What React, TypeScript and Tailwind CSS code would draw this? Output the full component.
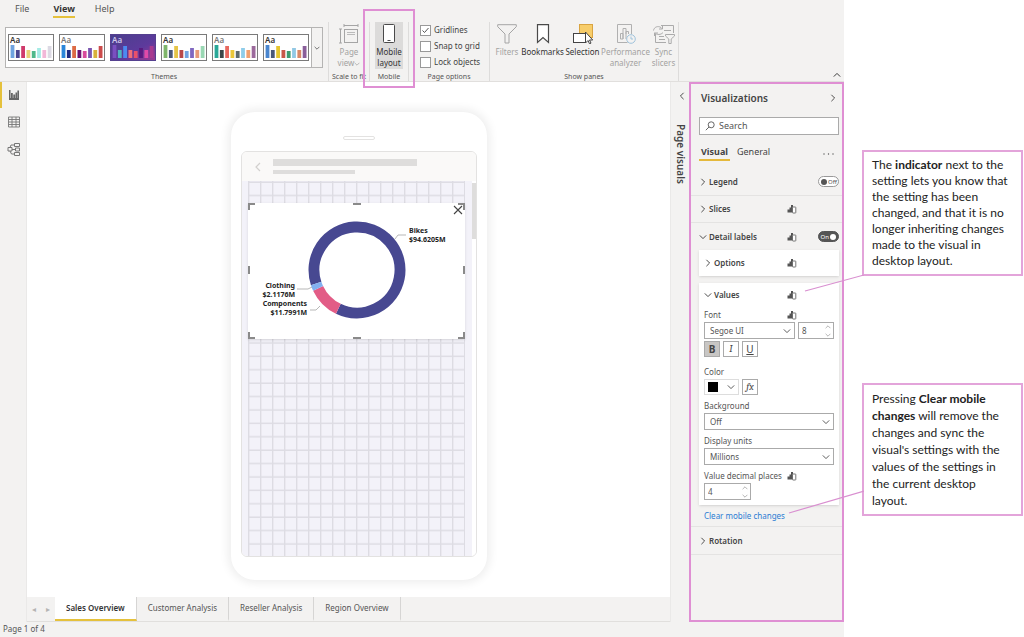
import { useState } from "react";
import type { ReactNode } from "react";

type Theme = { dark?: boolean; muted?: boolean; colors: string[] };

const THEMES: Theme[] = [
  { colors: ["#6fa3e0", "#4a4590", "#cf3a6b", "#e8d079", "#4fb98a", "#a5ebe5", "#f2b7d8", "#dcd9e4"] },
  { muted: true, colors: ["#2b86d9", "#1e2a80", "#dd6b45", "#6b1470", "#d84a9c", "#7a55b0", "#d8b13a", "#cc4b4b"] },
  { dark: true, colors: ["#7a4fc0", "#4fb5c0", "#4c8af0", "#ee6f78", "#e8506a", "#5a1a80", "#e04aa8", "#a83a90"] },
  { colors: ["#7fb56a", "#4a5878", "#e5c548", "#b8484a", "#72a3e0", "#8068c0", "#e89a78", "#9ad8b4"] },
  { muted: true, colors: ["#2aa898", "#3c4648", "#e8685f", "#ecc83a", "#5f6b6d", "#8fcdea", "#f0a070", "#9c6a9c"] },
  { colors: ["#4a86cf", "#4a5878", "#e5c52e", "#c8574a", "#3f9a70", "#92c8e4", "#d88868", "#8a5f9a"] },
];

const BAR_HEIGHTS = [13, 8, 12, 8, 7, 10, 8, 12];

function ThemeThumb({ theme }: { theme: Theme }) {
  const text = theme.dark ? "#cfc9ea" : theme.muted ? "#777" : "#333";
  return (
    <button type="button" aria-label="Theme" className="h-[27px] w-[46px]">
      <svg viewBox="0 0 46 27" className="h-full w-full">
        <defs>
          <linearGradient id="darkTheme" x1="0" y1="0" x2="1" y2="1">
            <stop offset="0" stopColor="#4a3f8c" />
            <stop offset="0.6" stopColor="#5d3a9c" />
            <stop offset="1" stopColor="#a03a90" />
          </linearGradient>
        </defs>
        <rect x="0.5" y="0.5" width="45" height="26" fill={theme.dark ? "url(#darkTheme)" : "#fff"} stroke={theme.dark ? "#55408f" : "#7a7a7a"} />
        <text x="2" y="9" fontSize="8" fontWeight="600" fill={text} fontFamily="Noto Sans, sans-serif">
          Aa
        </text>
        {theme.colors.map((c, i) => (
          <rect key={i} x={2.6 + i * 5.3} y={24 - BAR_HEIGHTS[i]} width="3.8" height={BAR_HEIGHTS[i]} fill={c} />
        ))}
      </svg>
    </button>
  );
}

function Chevron({ dir, className = "h-2 w-2" }: { dir: "left" | "right" | "down" | "up"; className?: string }) {
  const d = {
    left: "M7 1 3 5l4 4",
    right: "M3 1l4 4-4 4",
    down: "M1 3l4 4 4-4",
    up: "M1 7l4-4 4 4",
  }[dir];
  return (
    <svg viewBox="0 0 10 10" className={className} fill="none" stroke="currentColor" strokeWidth="1.2" aria-hidden>
      <path d={d} />
    </svg>
  );
}

function PageViewIcon() {
  return (
    <svg viewBox="0 0 20 20" className="h-5 w-5" fill="none" stroke="#a5a5a5" aria-hidden>
      <path d="M5 1.5h14M5 0v3M19 0v3M1.500 5v14M0 5h3M0 19h3" />
      <rect x="5.500" y="5.500" width="13" height="13" />
      <path d="M8 8.500h8M8 10.500h8" stroke="#bbb" />
    </svg>
  );
}

function PhoneIcon() {
  return (
    <svg viewBox="0 0 20 20" className="h-5 w-5" aria-hidden>
      <rect x="4.500" y="0.500" width="11" height="18" rx="1" fill="#fff" stroke="#4a4a4a" />
      <path d="M8.500 16.500h3" stroke="#4a4a4a" />
    </svg>
  );
}

function FilterIcon() {
  return (
    <svg viewBox="0 0 20 20" className="h-5 w-5" fill="none" stroke="#a5a5a5" aria-hidden>
      <path d="M0.700 0.700h18.600v2L12 10v9H8v-9L0.700 2.700z" />
    </svg>
  );
}

function BookmarkIcon() {
  return (
    <svg viewBox="0 0 20 20" className="h-5 w-5" fill="#fff" stroke="#4a4a4a" strokeWidth="1.200" aria-hidden>
      <path d="M4.500 0.600h11v17.800L10 13.500l-5.500 4.900z" />
    </svg>
  );
}

function SelectionIcon() {
  return (
    <svg viewBox="0 0 20 20" className="h-5 w-5" aria-hidden>
      <rect x="6.500" y="0.500" width="13" height="13" fill="#f7cd6a" stroke="#d9a441" />
      <rect x="0.500" y="9.500" width="12" height="9" fill="#fff" stroke="#444" />
      <path d="M12.500 8v11l2.500-2.500 1.500 3.300 1.500-.700-1.500-3.100h3.200z" fill="#fff" stroke="#444" />
    </svg>
  );
}

function PerformanceIcon() {
  return (
    <svg viewBox="0 0 20 20" className="h-5 w-5" fill="none" stroke="#b0b0b0" aria-hidden>
      <path d="M15.500 10V0.500h-14v18h10" />
      <path d="M4.500 15V9.500h2.500V15zM7 15V4.500h3V15M10 10V7.500h2.500V10" />
      <circle cx="15" cy="15" r="4.300" stroke="#9fc3dc" fill="#f3f2f1" />
      <path d="M15 12.500V15h2" stroke="#9fc3dc" />
    </svg>
  );
}

function SyncIcon() {
  return (
    <svg viewBox="0 0 22 20" className="h-5 w-[22px]" fill="none" stroke="#ababab" aria-hidden>
      <path d="M8 1.500h12.500V9M2.500 10v8.500H13M11 6.500h7M6 12.500h5M6 15.500h6" />
      <path d="M0.500 6.500C1 3 5 1.500 8 3.500L9.500 5M9.500 1.500V5H6M10 8.500C8 11 4 11 1.500 9M1.500 12V9H5" />
      <path d="M12.500 10.500h9v1.500l-3.300 3v4.500h-2.400V15l-3.300-3z" fill="#f3f2f1" />
    </svg>
  );
}

// small bars + phone mark shown beside settings that differ on mobile
function ChangedMark() {
  return (
    <svg viewBox="0 0 10 10" className="h-2.5 w-2.5" role="img" aria-label="Changed">
      <path d="M0.500 5.500h2V3.500h1.500V1h2v7.500H0.500z" fill="#555" />
      <rect x="5.500" y="3" width="3.300" height="6" rx="0.500" fill="#fff" stroke="#666" strokeWidth="0.900" />
    </svg>
  );
}

function RibbonGroup({ caption, className, children }: { caption: string; className: string; children: ReactNode }) {
  return (
    <section aria-label={caption} className={`relative flex h-[59px] flex-col border-r border-[#dddcdb] ${className}`}>
      <div className="h-[50px] w-full">{children}</div>
      <div className="text-center text-[7px] leading-[9px] whitespace-nowrap text-[#555]">{caption}</div>
    </section>
  );
}

function RibbonButton({ icon, label, disabled, active }: { icon: ReactNode; label: ReactNode; disabled?: boolean; active?: boolean }) {
  return (
    <button
      type="button"
      disabled={disabled}
      className={`flex h-[47px] flex-col items-center pt-0.5 text-center text-[8px] leading-[11px] whitespace-nowrap ${
        active ? "bg-[#dcdbda]" : ""
      } ${disabled ? "text-[#a3a2a1]" : "text-[#333]"}`}
    >
      {icon}
      <span className="mt-0.5">{label}</span>
    </button>
  );
}

function Tick({ label, defaultChecked }: { label: string; defaultChecked?: boolean }) {
  return (
    <label className="flex h-4 items-center gap-[3px] text-[8px] text-[#444]">
      <span className="grid">
        <input
          type="checkbox"
          defaultChecked={defaultChecked}
          className="peer col-start-1 row-start-1 h-[11px] w-[11px] appearance-none border border-[#999] bg-white"
        />
        <svg viewBox="0 0 11 11" className="pointer-events-none col-start-1 row-start-1 hidden h-[11px] w-[11px] peer-checked:block" fill="none" stroke="#555">
          <path d="M2.500 5.500l2 2 4-4.500" />
        </svg>
      </span>
      {label}
    </label>
  );
}

function Ribbon() {
  return (
    <header className="relative border-b border-[#e1dfdd] bg-[#f3f2f1]">
      <nav className="flex h-[22px] items-start gap-6 pt-px pl-[15px] text-[9px] text-[#555]">
        <button type="button" className="h-[17px] border-b-2 border-transparent">File</button>
        <button type="button" className="h-[17px] border-b-2 border-[#e5c13c] font-bold text-[#333]">View</button>
        <button type="button" className="-ml-1 h-[17px] border-b-2 border-transparent">Help</button>
      </nav>
      <div className="flex h-[59px]">
        <RibbonGroup caption="Themes" className="w-[329px]">
          <div className="mt-[5px] ml-[5px] flex h-[41px] w-[318px] items-center border border-[#b5b4b3] bg-white">
            <div className="flex flex-1 items-center gap-[5px] pl-0.5">
              {THEMES.map((t, i) => (
                <ThemeThumb key={i} theme={t} />
              ))}
            </div>
            <button type="button" aria-label="More themes" className="flex h-full w-[11px] items-center justify-center border-l border-[#b5b4b3] bg-[#f3f2f1] text-[#444]">
              <Chevron dir="down" className="h-1.5 w-1.5" />
            </button>
          </div>
        </RibbonGroup>
        <RibbonGroup caption="Scale to fit" className="w-[41px] items-center">
          <div className="flex justify-center">
            <RibbonButton
              disabled
              icon={<PageViewIcon />}
              label={
                <>
                  Page
                  <br />
                  view
                  <Chevron dir="down" className="inline h-1.5 w-1.5" />
                </>
              }
            />
          </div>
        </RibbonGroup>
        <RibbonGroup caption="Mobile" className="w-[39px]">
          <div className="grid px-[5px]">
            <RibbonButton active icon={<PhoneIcon />} label={<>Mobile<br />layout</>} />
          </div>
          <div className="pointer-events-none absolute -top-[13px] -left-[7px] h-[79px] w-[52px] border-2 border-[#df8fd3]" />
        </RibbonGroup>
        <RibbonGroup caption="Page options" className="w-[81px]">
          <div className="pl-[11px]">
            <Tick label="Gridlines" defaultChecked />
            <Tick label="Snap to grid" />
            <Tick label="Lock objects" />
          </div>
        </RibbonGroup>
        <RibbonGroup caption="Show panes" className="w-[189px]">
          <div className="grid grid-cols-[26px_45px_35px_51px_25px] pl-[4px]">
            <RibbonButton disabled icon={<FilterIcon />} label="Filters" />
            <RibbonButton icon={<BookmarkIcon />} label="Bookmarks" />
            <RibbonButton icon={<SelectionIcon />} label="Selection" />
            <RibbonButton disabled icon={<PerformanceIcon />} label={<>Performance<br />analyzer</>} />
            <RibbonButton disabled icon={<SyncIcon />} label={<>Sync<br />slicers</>} />
          </div>
        </RibbonGroup>
        <button type="button" aria-label="Collapse ribbon" className="mt-auto mr-[3px] mb-0.5 ml-auto text-[#333]">
          <Chevron dir="up" className="block h-2 w-2" />
        </button>
      </div>
    </header>
  );
}

function ViewRail() {
  return (
    <nav aria-label="Views" className="w-[27px] shrink-0 border-r border-[#eae9e8] bg-[#f3f2f1]">
      <button type="button" aria-label="Report" className="flex h-[26px] w-full items-center justify-center border-l-2 border-[#e5c13c]">
        <svg viewBox="0 0 12 12" className="h-3 w-3" fill="#666" aria-hidden>
          <path d="M1 1h1.500v8H11v2H1zM3 4h1.800v6H3zM5.300 5.500h1.800V10H5.300zM7.500 3.500h1.600V10H7.500zM9.400 1.500H11V10H9.400z" />
        </svg>
      </button>
      <button type="button" aria-label="Data" className="flex h-[27px] w-full items-center justify-center pl-0.5">
        <svg viewBox="0 0 12 12" className="h-3 w-3" fill="none" stroke="#777" strokeWidth="0.900" aria-hidden>
          <path d="M.5 1h11v10H.5zM.5 3.500h11M.5 6h11M.5 8.500h11M4 1v10M8 1v10" />
        </svg>
      </button>
      <button type="button" aria-label="Model" className="flex h-[27px] w-full items-center justify-center pl-0.5">
        <svg viewBox="0 0 14 14" className="h-3.5 w-3.5" fill="none" stroke="#777" aria-hidden>
          <path d="M7.500 1.500h5v3h-5zM8.500 6h4v3h-4zM7.500 10.500h5v3h-5zM1 5.500h4v3.500H1zM7.500 3H4L3 5.500M3 9l1.500 3h3M5 7.500h3.500" />
        </svg>
      </button>
    </nav>
  );
}

const CX = 109;
const CY = 67;
const R = 43;

function arc(from: number, to: number) {
  const pt = (deg: number) => {
    const a = ((deg - 90) * Math.PI) / 180;
    return `${(CX + R * Math.cos(a)).toFixed(2)} ${(CY + R * Math.sin(a)).toFixed(2)}`;
  };
  return `M${pt(from)}A${R} ${R} 0 ${to - from > 180 ? 1 : 0} 1 ${pt(to)}`;
}

function DonutChart() {
  return (
    <svg viewBox="0 0 217 136" className="block w-full" fill="none">
      <path d={arc(251.8, 565.7)} stroke="#474891" strokeWidth="11" />
      <path d={arc(205.7, 244.8)} stroke="#e25c86" strokeWidth="11" />
      <path d={arc(244.8, 251.8)} stroke="#82b0f0" strokeWidth="11" />
      <path d="M147 36l3-4h8M49 86h11l4-2M62 107h6l4-4" stroke="#a5a5a5" strokeWidth="0.800" />
      <g fontFamily="Noto Sans, sans-serif" fontSize="7" fontWeight="700" fill="#222">
        <text x="161" y="30">Bikes</text>
        <text x="161" y="39">$94.6205M</text>
        <g textAnchor="end">
          <text x="47" y="85">Clothing</text>
          <text x="47" y="94">$2.1176M</text>
          <text x="59" y="103">Components</text>
          <text x="59" y="112">$11.7991M</text>
        </g>
      </g>
      <g stroke="#8a8a8a" strokeWidth="2">
        <path d="M1 7V1h6M210 1h6v6M216 129v6h-6M7 135H1v-6M105 1h8M105 135h8M1 63v8M216 63v8" />
      </g>
      <path d="M206 3l8 8M214 3l-8 8" stroke="#444" strokeWidth="1.100" />
    </svg>
  );
}

function PhoneGrid() {
  return (
    <svg className="block h-[375px] w-[217px]" aria-hidden>
      <defs>
        <pattern id="phoneGrid" width="12" height="13.4" patternUnits="userSpaceOnUse">
          <path d="M0.700 0v13.400M0 1.200h12" fill="none" stroke="#dddce3" strokeWidth="1.400" />
        </pattern>
      </defs>
      <rect width="217" height="375" fill="url(#phoneGrid)" />
    </svg>
  );
}

function PhoneCanvas() {
  return (
    <div className="flex flex-1 justify-center bg-white pt-[30px] pb-4 pl-[20px]">
      <div className="h-[468px] w-[256px] rounded-[24px] bg-white px-[10px] pt-[24px] shadow-[0_0_10px_3px_rgba(0,0,0,0.07)]">
        <div className="mx-auto h-1 w-8 rounded-sm border border-[#e3e2e1]" />
        <div className="mt-[11px] overflow-hidden rounded-md border border-[#e3e2e1]">
          <div className="flex h-[29px] items-center gap-[10px] bg-[#faf9f8] pl-[11px] text-[#d2d0ce]">
            <Chevron dir="left" className="h-3 w-2.5" />
            <div>
              <div className="h-[7px] w-36 bg-[#dedddc]" />
              <div className="mt-1 h-1 w-[82px] bg-[#dedddc]" />
            </div>
          </div>
          <div className="flex">
            <div className="relative w-[230px] bg-[#f3f2f9] pl-1.5">
              <PhoneGrid />
              <div className="absolute top-[22px] left-1.5 w-[217px] bg-white shadow-sm">
                <DonutChart />
              </div>
            </div>
            <div className="flex-1 bg-white pt-0.5">
              <div className="h-14 w-1 bg-[#dedddc]" />
            </div>
          </div>
        </div>
      </div>
    </div>
  );
}

const PAGES = ["Sales Overview", "Customer Analysis", "Reseller Analysis", "Region Overview"];

function PageTabs() {
  const [page, setPage] = useState(PAGES[0]);
  return (
    <div className="flex h-[25px] border-b border-[#e1dfdd] bg-[#f3f2f1] text-[8px] text-[#555]">
      <div className="flex w-7 items-center justify-around text-[8px] text-[#b5b4b3]">
        <span>◂</span>
        <span>▸</span>
      </div>
      {PAGES.map((p) => (
        <button
          key={p}
          type="button"
          onClick={() => setPage(p)}
          className={`border-r border-b-2 border-r-[#d6d5d4] px-[11px] ${
            p === page ? "border-b-[#e5c13c] bg-white font-semibold text-[#333]" : "border-b-transparent"
          }`}
        >
          {p}
        </button>
      ))}
    </div>
  );
}

function Switch({ label, defaultChecked }: { label: string; defaultChecked?: boolean }) {
  const [on, setOn] = useState(!!defaultChecked);
  return (
    <label
      className={`flex h-[11px] w-[21px] items-center rounded-full border px-0.5 text-[6px] leading-none ${
        on ? "justify-end border-[#555] bg-[#555] text-white" : "flex-row-reverse justify-end border-[#999] bg-white text-[#555]"
      }`}
    >
      <input type="checkbox" role="switch" aria-label={label} className="sr-only" checked={on} onChange={(e) => setOn(e.target.checked)} />
      <span className="px-px">{on ? "On" : "Off"}</span>
      <span className={`h-1.5 w-1.5 shrink-0 rounded-full ${on ? "bg-white" : "bg-[#555]"}`} />
    </label>
  );
}

function SettingRow({
  label,
  open,
  marked,
  className = "",
  children,
}: {
  label: string;
  open?: boolean;
  marked?: boolean;
  className?: string;
  children?: ReactNode;
}) {
  return (
    <div className={`grid grid-cols-[1fr_10px_42px] items-center ${className}`}>
      <button type="button" aria-expanded={!!open} className="flex items-center gap-0.5 text-[8px] font-semibold text-[#444]">
        <Chevron dir={open ? "down" : "right"} />
        {label}
      </button>
      {marked ? <ChangedMark /> : <span />}
      <div className="flex justify-end">{children}</div>
    </div>
  );
}

function FieldLabel({ htmlFor, marked, children }: { htmlFor: string; marked?: boolean; children: ReactNode }) {
  return (
    <div className="grid h-[15px] grid-cols-[1fr_10px_37px] items-center">
      <label htmlFor={htmlFor} className="text-[8px] whitespace-nowrap text-[#555]">
        {children}
      </label>
      {marked && <ChangedMark />}
    </div>
  );
}

function Dropdown({ id, value }: { id: string; value: string }) {
  return (
    <div className="grid flex-1 items-center text-[#555]">
      <select id={id} defaultValue={value} className="col-start-1 row-start-1 h-[17px] appearance-none border border-[#aaa] bg-white pl-[5px] text-[8px]">
        <option>{value}</option>
      </select>
      <Chevron dir="down" className="pointer-events-none col-start-1 row-start-1 mr-1 h-2 w-2 justify-self-end" />
    </div>
  );
}

function NumberBox({ id, value, label, className }: { id: string; value: string; label?: string; className: string }) {
  return (
    <div className={`flex h-[17px] items-center border border-[#aaa] bg-white ${className}`}>
      <input id={id} aria-label={label} defaultValue={value} inputMode="numeric" className="w-0 flex-1 pl-[3px] text-[8px] text-[#555] outline-none" />
      <div className="flex flex-col gap-0.5 pr-0.5 text-[#999]">
        <button type="button" aria-label="Increase"><Chevron dir="up" className="block h-1.5 w-1.5" /></button>
        <button type="button" aria-label="Decrease"><Chevron dir="down" className="block h-1.5 w-1.5" /></button>
      </div>
    </div>
  );
}

const SQUARE = "flex h-4 w-4 items-center justify-center border border-[#aaa] text-[10px] leading-none text-[#444]";

function ValuesCard() {
  return (
    <div className="mt-[7px] bg-white px-[5px] pb-[5px] shadow">
      <SettingRow label="Values" open marked className="-mr-[5px] h-6" />
      <FieldLabel htmlFor="font" marked>Font</FieldLabel>
      <div className="flex gap-[3px]">
        <Dropdown id="font" value="Segoe UI" />
        <NumberBox id="size" label="Font size" value="8" className="w-[36px]" />
      </div>
      <div className="mt-0.5 flex gap-[3px]">
        <button type="button" aria-label="Bold" className={`${SQUARE} bg-[#c8c6c4] font-bold`}>B</button>
        <button type="button" aria-label="Italic" className={`${SQUARE} font-serif italic`}>I</button>
        <button type="button" aria-label="Underline" className={`${SQUARE} underline`}>U</button>
      </div>
      <div className="mt-[7px]">
        <FieldLabel htmlFor="color">Color</FieldLabel>
      </div>
      <div className="flex gap-[3px]">
        <button id="color" type="button" className="flex h-4 w-[35px] items-center justify-between border border-[#ddd] px-[3px] text-[#555]">
          <span className="h-2.5 w-2.5 bg-black" />
          <Chevron dir="down" />
        </button>
        <button type="button" aria-label="Conditional formatting" className={`${SQUARE} font-serif italic`}>fx</button>
      </div>
      <div className="mt-[3px]">
        <FieldLabel htmlFor="background">Background</FieldLabel>
        <Dropdown id="background" value="Off" />
      </div>
      <div className="mt-[3px]">
        <FieldLabel htmlFor="units">Display units</FieldLabel>
        <Dropdown id="units" value="Millions" />
      </div>
      <div className="mt-[3px]">
        <FieldLabel htmlFor="decimals" marked>Value decimal places</FieldLabel>
        <NumberBox id="decimals" value="4" className="w-[47px]" />
      </div>
    </div>
  );
}

function VisualizationsPane() {
  return (
    <aside className="w-[155px] shrink-0 border-2 border-[#df8fd3] bg-[#f3f2f1]">
      <div className="flex h-7 items-center justify-between pr-[5px] pl-[10px] text-[#444]">
        <h2 className="text-[10px] font-semibold">Visualizations</h2>
        <button type="button" aria-label="Collapse pane"><Chevron dir="right" className="block h-2 w-2" /></button>
      </div>
      <div className="px-2 pr-[3px]">
        <label className="mt-[5px] flex h-[18px] items-center gap-1 border border-[#aaa] bg-white pl-[5px]">
          <svg viewBox="0 0 10 10" className="h-2.5 w-2.5 shrink-0" fill="none" stroke="#555" strokeWidth="0.900" aria-hidden>
            <circle cx="6.200" cy="3.800" r="3" />
            <path d="M4 6L.8 9.200" />
          </svg>
          <input type="search" aria-label="Search" placeholder="Search" className="w-0 flex-1 text-[9px] outline-none placeholder:text-[#555]" />
        </label>
        <div className="mt-2 flex h-[18px] text-[9px] text-[#444]">
          <button type="button" className="border-b-2 border-[#e5b93c] px-0.5 pt-px font-bold">Visual</button>
          <button type="button" className="ml-[7px] border-b-2 border-transparent pt-px">General</button>
          <button type="button" aria-label="More options" className="mr-[5px] ml-auto">
            <svg viewBox="0 0 11 10" className="h-2.5 w-[11px]" fill="#555" aria-hidden>
              <circle cx="1" cy="7" r="0.700" />
              <circle cx="5.500" cy="7" r="0.700" />
              <circle cx="10" cy="7" r="0.700" />
            </svg>
          </button>
        </div>
      </div>
      <SettingRow label="Legend" className="mt-[7px] h-7 border-b border-[#e4e3e2] pr-[3px] pl-2">
        <Switch label="Legend" />
      </SettingRow>
      <SettingRow label="Slices" marked className="h-[27px] border-b border-[#e4e3e2] pr-[3px] pl-2" />
      <SettingRow label="Detail labels" open marked className="h-[27px] pr-[3px] pl-2">
        <Switch label="Detail labels" defaultChecked />
      </SettingRow>
      <div className="pr-[3px] pl-2">
        <div className="bg-white pl-[5px] shadow">
          <SettingRow label="Options" marked className="h-[26px]" />
        </div>
        <ValuesCard />
      </div>
      <div className="flex h-[22px] items-center border-b border-[#e4e3e2] pl-[13px]">
        <a href="#clear" className="text-[8px] text-[#2b7cd3]">Clear mobile changes</a>
      </div>
      <SettingRow label="Rotation" className="h-7 border-b border-[#e4e3e2] pr-[3px] pl-2" />
    </aside>
  );
}

function Callout({ className = "", leader, children }: { className?: string; leader: ReactNode; children: ReactNode }) {
  return (
    <div className={`relative border-2 border-[#e3a4da] bg-white px-[8px] text-[12px] text-[#222] ${className}`}>
      {children}
      {leader}
    </div>
  );
}

export default function App() {
  return (
    <div className="flex min-h-screen bg-white font-['Noto_Sans',sans-serif]">
      <div className="flex min-w-0 flex-1 flex-col bg-[#f3f2f1]">
        <Ribbon />
        <main className="flex flex-1">
          <ViewRail />
          <div className="flex min-w-0 flex-1 flex-col">
            <PhoneCanvas />
            <PageTabs />
          </div>
          <aside className="flex w-[19px] shrink-0 flex-col items-center border-l border-[#eae9e8] pt-[10px] text-[#444]">
            <button type="button" aria-label="Expand pane" className="ml-1"><Chevron dir="left" className="block h-2 w-2" /></button>
            <h2 className="mt-[24px] text-[10px] font-semibold whitespace-nowrap [writing-mode:vertical-rl]">Page visuals</h2>
          </aside>
          <VisualizationsPane />
        </main>
        <footer className="h-[15px] pl-[3px] text-[8px] leading-[13px] text-[#555]">Page 1 of 4</footer>
      </div>
      <div className="w-[180px] shrink-0 pt-[150px] pr-px pl-[18px] font-['Lato',sans-serif]">
        <Callout
          className="py-[5px] leading-[16px]"
          leader={
            <svg viewBox="0 0 60 18" className="absolute top-full right-full h-[18px] w-[60px]" aria-hidden>
              <path d="M1 17L60 1" stroke="#d98fd0" strokeWidth="1.200" />
            </svg>
          }
        >
          The <b>indicator</b> next to the setting lets you know that the setting has been changed, and that it is no longer inheriting changes made to the visual in desktop layout.
        </Callout>
        <Callout
          className="mt-[107px] py-[5px] leading-[17px]"
          leader={
            <svg viewBox="0 0 76 24" className="absolute right-full bottom-0 h-6 w-[76px]" aria-hidden>
              <path d="M1 23L76 1" stroke="#d98fd0" strokeWidth="1.200" />
            </svg>
          }
        >
          Pressing <b>Clear mobile changes</b> will remove the changes and sync the visual's settings with the values of the settings in the current desktop layout.
        </Callout>
      </div>
    </div>
  );
}
